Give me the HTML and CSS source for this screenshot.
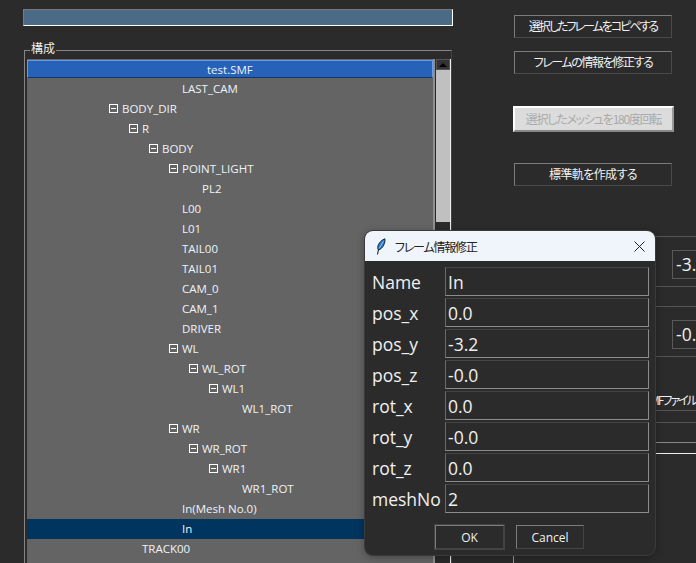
FILE: index.html
```html
<!DOCTYPE html>
<html lang="ja">
<head>
    <meta charset="UTF-8">
    <meta name="viewport" content="width=device-width, initial-scale=1.0">
    <title>フレーム情報修正</title>
    <link rel="stylesheet" href="styles.css">
</head>
<body>

<div class="app">
    <div class="left">
        <div class="progress"></div>
        <fieldset class="group">
            <legend>構成</legend>
            <div class="tree-wrap">
                <div class="tree">
                    <div class="row root">test.SMF</div>
                    <div class="row lv3">LAST_CAM</div>
                    <div class="row lv0"><span class="toggle"></span>BODY_DIR</div>
                    <div class="row lv1"><span class="toggle"></span>R</div>
                    <div class="row lv2"><span class="toggle"></span>BODY</div>
                    <div class="row lv3"><span class="toggle"></span>POINT_LIGHT</div>
                    <div class="row lv4">PL2</div>
                    <div class="row lv3">L00</div>
                    <div class="row lv3">L01</div>
                    <div class="row lv3">TAIL00</div>
                    <div class="row lv3">TAIL01</div>
                    <div class="row lv3">CAM_0</div>
                    <div class="row lv3">CAM_1</div>
                    <div class="row lv3">DRIVER</div>
                    <div class="row lv3"><span class="toggle"></span>WL</div>
                    <div class="row lv4"><span class="toggle"></span>WL_ROT</div>
                    <div class="row lv5"><span class="toggle"></span>WL1</div>
                    <div class="row lv6">WL1_ROT</div>
                    <div class="row lv3"><span class="toggle"></span>WR</div>
                    <div class="row lv4"><span class="toggle"></span>WR_ROT</div>
                    <div class="row lv5"><span class="toggle"></span>WR1</div>
                    <div class="row lv6">WR1_ROT</div>
                    <div class="row lv3">In(Mesh No.0)</div>
                    <div class="row lv3 current">In</div>
                    <div class="row lv1">TRACK00</div>
                </div>
                <div class="scrollbar">
                    <div class="arrow"><span class="arrow-up"></span></div>
                    <div class="thumb"></div>
                </div>
            </div>
        </fieldset>
    </div>

    <div class="right">
        <div class="button btn-copy">選択したフレームをコピペする</div>
        <div class="button btn-edit">フレームの情報を修正する</div>
        <div class="button disabled">選択したメッシュを180度回転</div>
        <div class="button btn-track">標準軌を作成する</div>

        <div class="coords">
            <div class="coords-title">フレームの座標情報</div>
            <div class="coords-row"><span class="coords-value">-3.</span></div>
            <div class="coords-gap"></div>
            <div class="coords-row"><span class="coords-value">-0.</span></div>
            <div class="save-row">SMFファイル</div>
            <div class="line-row"></div>
            <div class="line-row short"></div>
            <div class="line-row white"></div>
        </div>
    </div>
</div>

<!-- 修正ダイアログ -->
<div class="dialog">
    <div class="titlebar">
        <svg class="feather" width="10" height="17" viewBox="0 0 10 17">
            <path d="M1.5 16.5 L2.6 11" stroke="#111" stroke-width="1" fill="none"/>
            <path d="M2.4 12 C0.6 9 2.6 3.4 8.9 0.8 C9.4 4.6 7.2 10.6 2.4 12 Z" fill="#2a7cc8" stroke="#0c2744" stroke-width="1"/>
            <path d="M3.2 10.4 L7.4 3.2" stroke="#a9d6fb" stroke-width="0.8" fill="none"/>
        </svg>
        <span class="title">フレーム情報修正</span>
        <svg class="close" width="11" height="11" viewBox="0 0 11 11">
            <path d="M0.5 0.5 L10.5 10.5 M10.5 0.5 L0.5 10.5" stroke="#222" stroke-width="1" fill="none"/>
        </svg>
    </div>
    <div class="form">
        <div class="label">Name</div><div class="field">In</div>
        <div class="label">pos_x</div><div class="field">0.0</div>
        <div class="label">pos_y</div><div class="field">-3.2</div>
        <div class="label">pos_z</div><div class="field">-0.0</div>
        <div class="label">rot_x</div><div class="field">0.0</div>
        <div class="label">rot_y</div><div class="field">-0.0</div>
        <div class="label">rot_z</div><div class="field">0.0</div>
        <div class="label">meshNo</div><div class="field">2</div>
    </div>
    <div class="actions">
        <div class="dlg-button focused">OK</div>
        <div class="dlg-button">Cancel</div>
    </div>
</div>

</body>
</html>
```

FILE: styles.css
```css
* {
    box-sizing: border-box;
}
body {
    margin: 0;
    height: 563px;
    overflow: hidden;
    background-color: #2b2b2b;
    color: #f0f0f0;
    font-family: "Open Sans", "Noto Sans CJK JP", sans-serif;
    font-size: 11.5px;
}
.app {
    display: flex;
    height: 563px;
    overflow: hidden;
}

/* 左側 */
.left {
    width: 430px;
    margin-left: 23px;
    padding-top: 9px;
    flex-shrink: 0;
}
.progress {
    height: 17px;
    background-color: #4b6a85;
    border: 1px solid #7a7a7a;
    border-right-color: #fff;
    border-bottom-color: #fff;
}
.group {
    margin: 15px 0 0 1px;
    padding: 0 0 0 2px;
    width: 428px;
    height: 600px;
    border: 1px solid #858585;
    border-right-color: #444;
    min-width: 0;
}
.group legend {
    margin-left: 3px;
    padding: 0 1px 4px;
    font-family: "Noto Sans CJK JP", sans-serif;
    font-size: 12px;
    line-height: 14px;
    color: #eee;
}
.tree-wrap {
    display: flex;
    height: 560px;
}
.tree {
    width: 408px;
    flex-shrink: 0;
    background-color: #646464;
    border-right: 2px solid #8f8f8f;
}
.row {
    height: 20px;
    line-height: 20px;
    white-space: nowrap;
    color: #eef3fa;
}
.root {
    margin-top: 1px;
    height: 18px;
    margin-bottom: 1px;
    line-height: 17px;
    padding-left: 179px;
    background-color: #2562b8;
    border: 1px solid #6c9be0;
    border-bottom-color: #14356a;
}
.current {
    background-color: #003560;
}
.lv0 { padding-left: 95px; }
.lv1 { padding-left: 115px; }
.lv2 { padding-left: 135px; }
.lv3 { padding-left: 155px; }
.lv4 { padding-left: 175px; }
.lv5 { padding-left: 195px; }
.lv6 { padding-left: 215px; }
.toggle {
    display: inline-block;
    position: relative;
    width: 9px;
    height: 9px;
    margin-left: -13px;
    margin-right: 4px;
    border: 1px solid #fff;
}
.toggle::before {
    content: "";
    position: absolute;
    left: 1px;
    right: 1px;
    top: 3px;
    height: 1px;
    background-color: #fff;
}
.scrollbar {
    width: 15px;
    margin-left: 1px;
    display: flex;
    flex-direction: column;
    background-color: #2b2b2b;
    border-right: 1px solid #eee;
}
.arrow {
    height: 11px;
    display: flex;
    align-items: center;
    justify-content: center;
    background-color: #333;
    border: 1px solid #555;
}
.arrow-up {
    width: 0;
    height: 0;
    border-left: 4px solid transparent;
    border-right: 4px solid transparent;
    border-bottom: 4px solid #000;
}
.thumb {
    height: 152px;
    background-color: #c0c0c0;
}

/* 右側 */
.right {
    width: 183px;
    margin-left: 60px;
    padding-top: 15px;
    flex-shrink: 0;
}
.button {
    width: 158px;
    height: 23px;
    margin-left: 1px;
    padding-bottom: 2px;
    display: flex;
    align-items: center;
    justify-content: center;
    white-space: nowrap;
    font-family: "Noto Sans CJK JP", sans-serif;
    font-feature-settings: "palt";
    font-size: 12px;
    letter-spacing: -1.2px;
    color: #f2f2f2;
    border: 1px solid #7c7c7c;
    border-right-color: #4a4a4a;
    border-bottom-color: #4a4a4a;
}
.btn-copy {
    letter-spacing: -2px;
}
.btn-edit {
    margin-top: 13px;
    letter-spacing: -1.4px;
}
.disabled {
    width: 161px;
    height: 26px;
    margin-top: 32px;
    margin-left: 0;
    background-color: #dcdcdc;
    color: #aaa;
    border: 2px solid #fff;
    border-bottom-color: #888;
    border-right-color: #999;
}
.btn-track {
    margin-top: 31px;
    letter-spacing: -0.6px;
}
.coords {
    margin-top: 50px;
    position: relative;
    border-top: 1px solid #555;
    border-left: 1px solid #9a9a9a;
    height: 340px;
}
.coords-title {
    position: absolute;
    left: 8px;
    top: -9px;
    padding: 0 4px;
    line-height: 16px;
    background-color: #2b2b2b;
    font-family: "Noto Sans CJK JP", sans-serif;
    font-size: 12px;
    letter-spacing: 1px;
    white-space: nowrap;
}
.coords-row {
    display: flex;
    justify-content: flex-end;
    height: 50px;
    padding-top: 13px;
    border-bottom: 1px solid #555;
}
.coords-gap {
    height: 20px;
    border-bottom: 1px solid #555;
}
.coords-value {
    width: 24px;
    height: 29px;
    padding-left: 3px;
    line-height: 27px;
    font-size: 17.5px;
    white-space: nowrap;
    border: 1px solid #5a5a5a;
    border-right: none;
}
.save-row {
    display: flex;
    align-items: center;
    justify-content: flex-end;
    height: 21px;
    margin-top: 33px;
    padding-bottom: 2px;
    white-space: nowrap;
    font-family: "Noto Sans CJK JP", sans-serif;
    font-feature-settings: "palt";
    letter-spacing: -2px;
    font-size: 12px;
    border-bottom: 1px solid #555;
}
.line-row {
    height: 12px;
    border-bottom: 1px solid #555;
}
.line-row.short {
    height: 20px;
    border-bottom-color: #888;
}
.line-row.white {
    height: 11px;
    border-bottom-color: #eee;
}

/* ダイアログ */
.dialog {
    position: absolute;
    left: 365px;
    top: 231px;
    width: 290px;
    height: 324px;
    background-color: #2b2b2b;
    border-radius: 8px;
    box-shadow: 0 0 0 1px #3a3a3a, 0 2px 8px rgba(0, 0, 0, 0.35);
    overflow: hidden;
}
.titlebar {
    display: flex;
    align-items: center;
    height: 30px;
    padding: 0 10px 0 11px;
    background-color: #f0f4fb;
}
.feather {
    flex-shrink: 0;
}
.title {
    flex: 1;
    margin-left: 9px;
    font-family: "Noto Sans CJK JP", sans-serif;
    font-feature-settings: "palt";
    font-size: 12px;
    letter-spacing: -1.2px;
    color: #222;
}
.form {
    display: grid;
    grid-template-columns: 73px 204px;
    grid-auto-rows: 29px;
    row-gap: 2px;
    margin: 6px 0 0 7px;
}
.label {
    line-height: 30px;
    font-size: 17.5px;
    color: #f0f0f0;
    white-space: nowrap;
}
.field {
    padding-left: 2px;
    line-height: 29px;
    font-size: 17.5px;
    color: #f0f0f0;
    border: 1px solid #8c8c8c;
    border-top-color: #444;
    border-left-color: #6a6a6a;
}
.actions {
    display: flex;
    gap: 12px;
    margin: 12px 0 0 70px;
}
.dlg-button {
    width: 68px;
    height: 24px;
    display: flex;
    align-items: center;
    justify-content: center;
    font-size: 12px;
    color: #f0f0f0;
    border: 1px solid #7c7c7c;
    border-right-color: #444;
    border-bottom-color: #444;
}
.focused {
    width: 69px;
    box-shadow: 0 0 0 1px #444;
}
```
